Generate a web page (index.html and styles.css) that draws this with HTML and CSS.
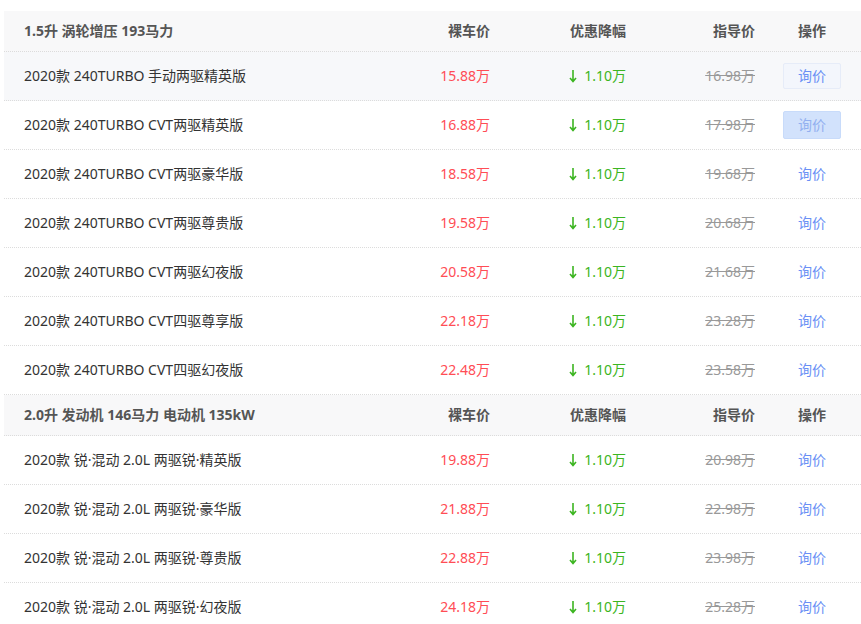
FILE: index.html
```html
<!DOCTYPE html>
<html lang="zh">
<head>
<meta charset="utf-8">
<link rel="stylesheet" href="styles.css">
</head>
<body>
<div class="table">
  <div class="row head"><div class="c name">1.5升 涡轮增压 193马力</div><div class="c r">裸车价</div><div class="c r">优惠降幅</div><div class="c r">指导价</div><div class="c ctr">操作</div></div>
  <div class="row hover"><div class="c name">2020款 240TURBO 手动两驱精英版</div><div class="c r red">15.88万</div><div class="c r green"><svg class="arr" width="8" height="14" viewBox="0 0 8 14"><path d="M4 1V12M1 9L4 12.5L7 9" fill="none" stroke="#3cb521" stroke-width="1.6"/></svg>1.10万</div><div class="c r del">16.98万</div><div class="c ctr"><span class="btn b1">询价</span></div></div>
  <div class="row"><div class="c name">2020款 240TURBO CVT两驱精英版</div><div class="c r red">16.88万</div><div class="c r green"><svg class="arr" width="8" height="14" viewBox="0 0 8 14"><path d="M4 1V12M1 9L4 12.5L7 9" fill="none" stroke="#3cb521" stroke-width="1.6"/></svg>1.10万</div><div class="c r del">17.98万</div><div class="c ctr"><span class="btn b2">询价</span></div></div>
  <div class="row"><div class="c name">2020款 240TURBO CVT两驱豪华版</div><div class="c r red">18.58万</div><div class="c r green"><svg class="arr" width="8" height="14" viewBox="0 0 8 14"><path d="M4 1V12M1 9L4 12.5L7 9" fill="none" stroke="#3cb521" stroke-width="1.6"/></svg>1.10万</div><div class="c r del">19.68万</div><div class="c ctr"><span class="btn">询价</span></div></div>
  <div class="row"><div class="c name">2020款 240TURBO CVT两驱尊贵版</div><div class="c r red">19.58万</div><div class="c r green"><svg class="arr" width="8" height="14" viewBox="0 0 8 14"><path d="M4 1V12M1 9L4 12.5L7 9" fill="none" stroke="#3cb521" stroke-width="1.6"/></svg>1.10万</div><div class="c r del">20.68万</div><div class="c ctr"><span class="btn">询价</span></div></div>
  <div class="row"><div class="c name">2020款 240TURBO CVT两驱幻夜版</div><div class="c r red">20.58万</div><div class="c r green"><svg class="arr" width="8" height="14" viewBox="0 0 8 14"><path d="M4 1V12M1 9L4 12.5L7 9" fill="none" stroke="#3cb521" stroke-width="1.6"/></svg>1.10万</div><div class="c r del">21.68万</div><div class="c ctr"><span class="btn">询价</span></div></div>
  <div class="row"><div class="c name">2020款 240TURBO CVT四驱尊享版</div><div class="c r red">22.18万</div><div class="c r green"><svg class="arr" width="8" height="14" viewBox="0 0 8 14"><path d="M4 1V12M1 9L4 12.5L7 9" fill="none" stroke="#3cb521" stroke-width="1.6"/></svg>1.10万</div><div class="c r del">23.28万</div><div class="c ctr"><span class="btn">询价</span></div></div>
  <div class="row"><div class="c name">2020款 240TURBO CVT四驱幻夜版</div><div class="c r red">22.48万</div><div class="c r green"><svg class="arr" width="8" height="14" viewBox="0 0 8 14"><path d="M4 1V12M1 9L4 12.5L7 9" fill="none" stroke="#3cb521" stroke-width="1.6"/></svg>1.10万</div><div class="c r del">23.58万</div><div class="c ctr"><span class="btn">询价</span></div></div>
  <div class="row head"><div class="c name">2.0升 发动机 146马力 电动机 135kW</div><div class="c r">裸车价</div><div class="c r">优惠降幅</div><div class="c r">指导价</div><div class="c ctr">操作</div></div>
  <div class="row"><div class="c name">2020款 锐·混动 2.0L 两驱锐·精英版</div><div class="c r red">19.88万</div><div class="c r green"><svg class="arr" width="8" height="14" viewBox="0 0 8 14"><path d="M4 1V12M1 9L4 12.5L7 9" fill="none" stroke="#3cb521" stroke-width="1.6"/></svg>1.10万</div><div class="c r del">20.98万</div><div class="c ctr"><span class="btn">询价</span></div></div>
  <div class="row"><div class="c name">2020款 锐·混动 2.0L 两驱锐·豪华版</div><div class="c r red">21.88万</div><div class="c r green"><svg class="arr" width="8" height="14" viewBox="0 0 8 14"><path d="M4 1V12M1 9L4 12.5L7 9" fill="none" stroke="#3cb521" stroke-width="1.6"/></svg>1.10万</div><div class="c r del">22.98万</div><div class="c ctr"><span class="btn">询价</span></div></div>
  <div class="row"><div class="c name">2020款 锐·混动 2.0L 两驱锐·尊贵版</div><div class="c r red">22.88万</div><div class="c r green"><svg class="arr" width="8" height="14" viewBox="0 0 8 14"><path d="M4 1V12M1 9L4 12.5L7 9" fill="none" stroke="#3cb521" stroke-width="1.6"/></svg>1.10万</div><div class="c r del">23.98万</div><div class="c ctr"><span class="btn">询价</span></div></div>
  <div class="row"><div class="c name">2020款 锐·混动 2.0L 两驱锐·幻夜版</div><div class="c r red">24.18万</div><div class="c r green"><svg class="arr" width="8" height="14" viewBox="0 0 8 14"><path d="M4 1V12M1 9L4 12.5L7 9" fill="none" stroke="#3cb521" stroke-width="1.6"/></svg>1.10万</div><div class="c r del">25.28万</div><div class="c ctr"><span class="btn">询价</span></div></div>
</div>
</body>
</html>
```
FILE: styles.css
```css
html, body { margin: 0; padding: 0; background: #fff; overflow: hidden; }
body {
  font-family: "Noto Sans", "Noto Sans CJK SC", sans-serif;
  font-size: 14px;
  color: #333;
}
.table {
  margin: 11px 0 0 4px;
  width: 857px;
}
.row {
  display: grid;
  grid-template-columns: 376px 110px 136px 129px 106px;
  height: 48px;
  align-items: center;
  border-bottom: 1px dotted #dcdcdc;
}
.row.head {
  height: 40px;
  background: #f8f8f9;
  font-weight: bold;
  color: #555;
}
.row.hover { background: #f7f8fa; }
.c { white-space: nowrap; line-height: 20px; padding-bottom: 1px; }
.name { padding-left: 20px; }
.r { text-align: right; }
.ctr { text-align: center; padding-left: 8px; }
.red { color: #ff4d55; }
.green { color: #3cb521; display: flex; justify-content: flex-end; align-items: center; }
.arr { margin-right: 7px; }
.del { color: #999; text-decoration: line-through; }
.btn {
  display: inline-block;
  width: 56px;
  height: 26px;
  line-height: 26px;
  color: #6a8ff5;
  border: 1px solid transparent;
  border-radius: 2px;
  box-sizing: content-box;
}
.btn.b1 { background: #f3f6fc; border-color: #e6ecf8; height: 24px; line-height: 24px; }
.btn.b2 { background: #d2e2fc; color: #93b0f0; border-color: #c8dbfa; }
```
